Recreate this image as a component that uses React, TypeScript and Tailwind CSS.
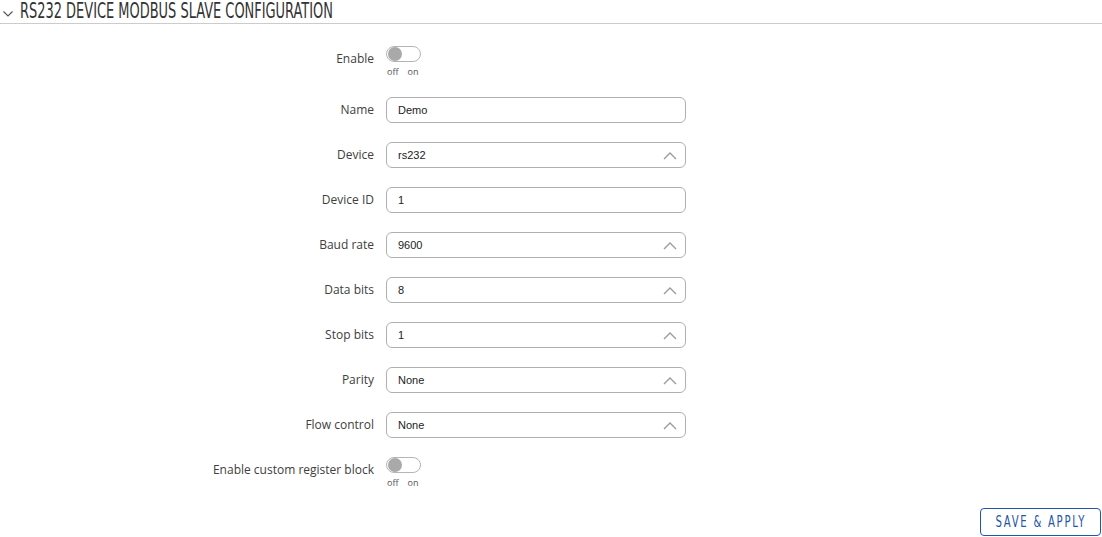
import React from "react";

const labelFont = { fontFamily: '"Open Sans", "Noto Sans", sans-serif' };
const inputFont = { fontFamily: '"Liberation Sans", Arial, sans-serif' };
const condFont = { fontFamily: '"DejaVu Sans Condensed", "DejaVu Sans", sans-serif' };

function Toggle() {
  return (
    <div className="flex flex-col">
      <div className="w-[35px] h-[16px] rounded-full border border-[#b5b5b5] bg-white flex items-center px-[1px]">
        <div className="w-[14px] h-[14px] rounded-full bg-[#a9a9a9]" />
      </div>
      <div className="flex gap-[9px] pl-[1px] mt-[4px] text-[9px] leading-[12px] text-[#555]" style={labelFont}>
        <span>off</span>
        <span>on</span>
      </div>
    </div>
  );
}

function ChevronUp() {
  return (
    <svg width="14" height="9" viewBox="0 0 14 9" fill="none">
      <path d="M1 8 L7 2 L13 8" stroke="#9a9a9a" strokeWidth="1.3" />
    </svg>
  );
}

function Field({ label, value, select }: { label: string; value: string; select?: boolean }) {
  return (
    <div className="flex h-[45px] items-start">
      <div className="w-[374px] h-[26px] flex items-center justify-end text-[12px] text-[#404040]" style={labelFont}>
        {label}
      </div>
      <div className="ml-[12px] w-[300px] h-[26px] rounded-[6px] border border-[#b0b0b0] bg-white flex items-center justify-between pl-[11px] pr-[8px]">
        <span className="text-[11px] text-[#222]" style={inputFont}>{value}</span>
        {select && <ChevronUp />}
      </div>
    </div>
  );
}

function ToggleRow({ label, h }: { label: string; h: string }) {
  return (
    <div className={`flex items-start ${h}`}>
      <div className="w-[374px] pt-[5px] text-right text-[12px] leading-[16px] text-[#404040]" style={labelFont}>
        {label}
      </div>
      <div className="ml-[12px]">
        <Toggle />
      </div>
    </div>
  );
}

export default function App() {
  return (
    <div className="w-[1102px] h-[537px] bg-white overflow-hidden relative">
      <div className="h-[24px] border-b border-[#cccccc] flex items-end">
        <div className="flex items-center h-[24px] -mt-[12px]">
          <svg width="10" height="6" viewBox="0 0 10 6" className="ml-[3px] mt-[6px]" fill="none">
            <path d="M0.5 0.5 L5 5 L9.5 0.5" stroke="#555" strokeWidth="1.2" />
          </svg>
          <span
            className="ml-[7px] inline-block origin-left scale-x-[0.655] whitespace-nowrap text-[22px] leading-[24px] text-[#333]"
            style={condFont}
          >
            RS232 DEVICE MODBUS SLAVE CONFIGURATION
          </span>
        </div>
      </div>
      <div className="pt-[22px]">
        <ToggleRow label="Enable" h="h-[51px]" />
        <Field label="Name" value="Demo" />
        <Field label="Device" value="rs232" select />
        <Field label="Device ID" value="1" />
        <Field label="Baud rate" value="9600" select />
        <Field label="Data bits" value="8" select />
        <Field label="Stop bits" value="1" select />
        <Field label="Parity" value="None" select />
        <Field label="Flow control" value="None" select />
        <ToggleRow label="Enable custom register block" h="h-[51px]" />
      </div>
      <div className="flex justify-end pr-[1px]">
        <button className="w-[121px] h-[28px] rounded-[4px] border border-[#1e56a8] flex items-center justify-center overflow-hidden">
          <span
            className="inline-block scale-x-[0.7] whitespace-nowrap text-[#1e56a8] text-[16px] tracking-[2.5px]"
            style={condFont}
          >
            SAVE &amp; APPLY
          </span>
        </button>
      </div>
    </div>
  );
}
